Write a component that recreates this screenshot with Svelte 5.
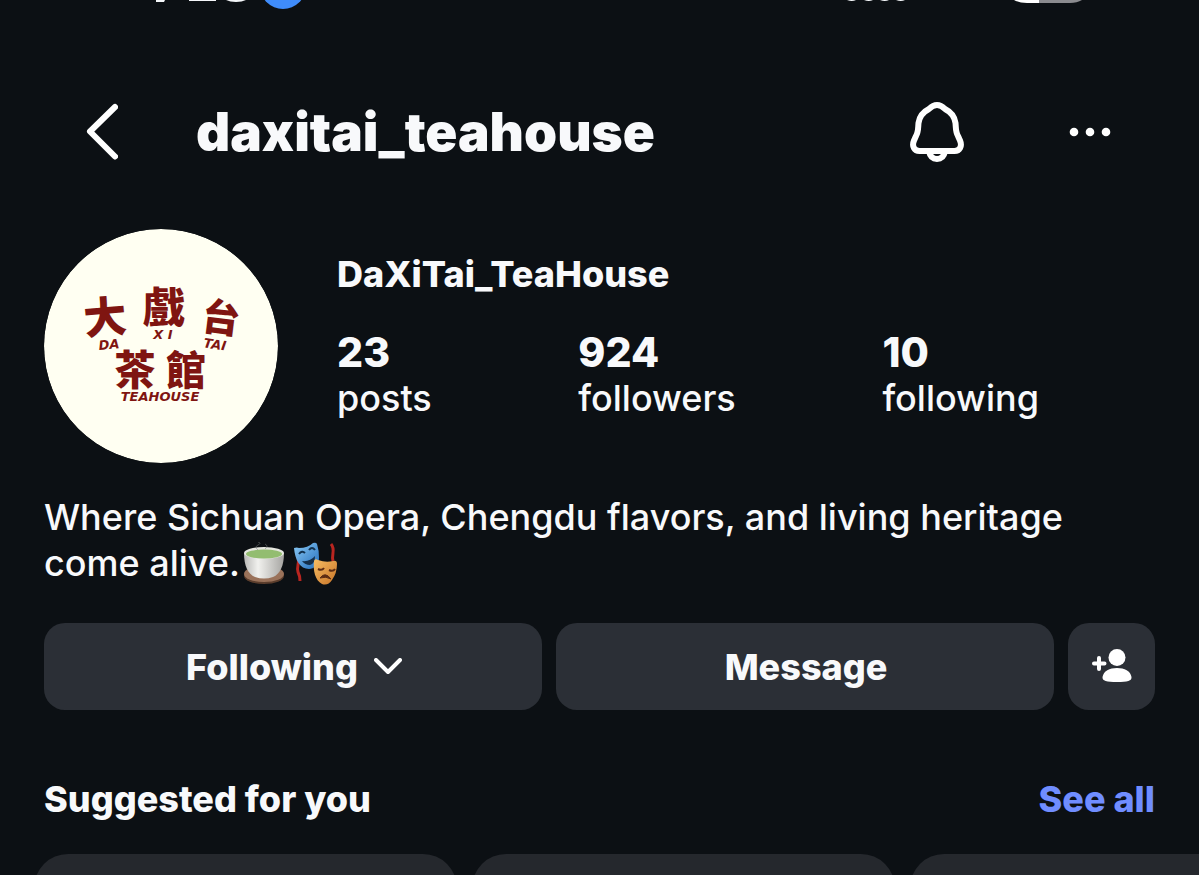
<script>
  const stats = [
    { value: 23, label: 'posts' },
    { value: 924, label: 'followers' },
    { value: 10, label: 'following' },
  ];

  let following = $state(true);
  const suggestions = [1, 2, 3];
</script>

<div class="page">
  <div class="status">
    <svg class="clock" width="180" height="10" viewBox="0 0 180 10" aria-hidden="true">
      <path d="M26 0h9l-1 2h-8z M59 0h27v1h-27z M96 0h20q-4 2-10 2t-10-2z" fill="#f5f7fa" />
      <circle cx="153" cy="-14" r="23" fill="#3f8cfb" />
    </svg>
    <svg class="signal" width="260" height="10" viewBox="0 0 260 10" aria-hidden="true">
      <path d="M16 0h9q-4 2-9 0z M33 0h9q-4 2-9 0z M49 0h9q-4 2-9 0z M65 0h9q-4 2-9 0z" fill="#f5f7fa" />
      <path d="M183 0h25v3h-12q-8 0-13-3z" fill="#fff" />
      <path d="M208 0h43q-5 3-12 3h-31z" fill="#8b8b8f" />
    </svg>
  </div>

  <header>
    <button class="icon-btn" aria-label="Back">
      <svg class="outline" width="34" height="58" viewBox="0 0 34 58">
        <path d="M31 4 6 28.500l25 25" />
      </svg>
    </button>
    <h1>daxitai_teahouse</h1>
    <button class="icon-btn bell" aria-label="Notifications">
      <svg class="outline" width="56" height="62" viewBox="0 0 56 62">
        <path d="M28 4C24.500 4 22.500 5.500 20 8C14 11 10.500 15 9.500 22C9 27 9.500 31 7 35L5 39.500C2.500 45.500 5.500 50 10.500 50H45.500C50.500 50 53.500 45.500 51 39.500L49 35C46.500 31 47 27 46.500 22C45.500 15 42 11 36 8C33.500 5.500 31.500 4 28 4Z" />
        <path d="M20 50.500C21 55.500 24 58 28 58C32 58 35 55.500 36 50.500" />
      </svg>
    </button>
    <button class="icon-btn dots" aria-label="More options">
      <svg width="42" height="10" viewBox="0 0 42 10">
        <circle cx="5" cy="5" r="4.300" />
        <circle cx="21" cy="5" r="4.300" />
        <circle cx="37" cy="5" r="4.300" />
      </svg>
    </button>
  </header>

  <main>
    <section class="profile">
      <svg class="avatar" width="234" height="234" viewBox="0 0 234 234" role="img" aria-label="Da Xi Tai Teahouse">
        <circle cx="117" cy="117" r="117" fill="#fffff2" />
        <g class="han">
          <text x="61" y="104" font-size="43" transform="rotate(-5 61 88)">大</text>
          <text x="120" y="94" font-size="42">戲</text>
          <text x="177" y="103" font-size="38" transform="rotate(7 177 90)">台</text>
          <text x="91" y="156" font-size="41">茶</text>
          <text x="142" y="156" font-size="40">館</text>
        </g>
        <g class="latin">
          <text x="65" y="120" transform="rotate(-5 65 115)">DA</text>
          <text x="119" y="110">X I</text>
          <text x="171" y="120" transform="rotate(8 171 115)">TAI</text>
          <text x="116" y="172">TEAHOUSE</text>
        </g>
      </svg>

      <div class="info">
        <h2>DaXiTai_TeaHouse</h2>
        <div class="stats">
          {#each stats as stat}
            <a href="#{stat.label}">
              <strong>{stat.value}</strong>
              <span>{stat.label}</span>
            </a>
          {/each}
        </div>
      </div>
    </section>

    <p class="bio">
      Where Sichuan Opera, Chengdu flavors, and living heritage <br />come alive.<svg class="emoji" width="44" height="44" viewBox="0 0 44 44" role="img" aria-label="Tea">
        <defs>
          <linearGradient id="cup" x1="0" x2="1">
            <stop offset="0" stop-color="#b9b9b7" />
            <stop offset=".35" stop-color="#f1f1ee" />
            <stop offset="1" stop-color="#a6a5a2" />
          </linearGradient>
        </defs>
        <ellipse cx="22" cy="34" rx="20" ry="8" fill="#5b3d2c" />
        <ellipse cx="22" cy="32" rx="20" ry="8" fill="#9a725a" />
        <path d="M2 11c0 13 4 21 11 24q9 3 18 0c7-3 11-11 11-24z" fill="url(#cup)" />
        <ellipse cx="22" cy="11" rx="20" ry="6" fill="#e5e6df" />
        <ellipse cx="22" cy="12" rx="18" ry="4.500" fill="#93bd70" />
        <path d="M16 8q-4-3 0-5t0-3M23 7q4-3 0-5" fill="none" stroke="#777c7c" stroke-width="1" opacity=".5" />
      </svg><svg class="emoji masks" width="46" height="44" viewBox="0 0 46 44" role="img" aria-label="Performing arts">
        <defs>
          <linearGradient id="blue" x2="1" y2="1">
            <stop offset="0" stop-color="#8ccbf6" />
            <stop offset="1" stop-color="#236dbb" />
          </linearGradient>
          <linearGradient id="gold" x2="1" y2="1">
            <stop offset="0" stop-color="#f7bd63" />
            <stop offset="1" stop-color="#c87427" />
          </linearGradient>
        </defs>
        <path d="M4 13c4 6-1 11 1 17q2 4 2 9M38 2c5 6 0 10 2 17" fill="none" stroke="#b92520" stroke-width="3" />
        <path d="M1 6q3-1 5 0 9 0 14-5 3-1 4 1 2 6 2 14c0 7-5 11-10 11C7 27 2 18 1 6z" fill="url(#blue)" />
        <path d="M6 12q3-4 6-1M16 8q3-4 6 0" fill="none" stroke="#12324f" stroke-width="2" />
        <path d="M9 19q8 1 13-5 0 8-5 9-5 0-8-4z" fill="#152f4a" />
        <path d="M21 19q1-3 4-1 8 3 15 1 4-1 4 3 0 9-5 16-4 6-10 4c-7-4-9-13-8-23z" fill="url(#gold)" />
        <path d="M25 27q4 2 6-1M36 28q4 2 6-1" fill="none" stroke="#5d2c13" stroke-width="2" />
        <path d="M27 36q5-7 11 1-5-3-11-1z" fill="#5d2c13" stroke="#5d2c13" stroke-width="1" />
      </svg>
    </p>

    <div class="actions">
      <button class="wide" onclick={() => (following = !following)}>
        {following ? 'Following' : 'Follow'}
        <svg width="28" height="18" viewBox="0 0 28 18" aria-hidden="true">
          <path d="M2 2l12 12L26 2" />
        </svg>
      </button>
      <button class="wide">Message</button>
      <button class="add" aria-label="Suggested accounts">
        <svg width="42" height="36" viewBox="0 0 42 36">
          <path class="plus" d="M8 9v11M3 14.500h10.500" />
          <circle cx="26" cy="8.500" r="8.500" />
          <path d="M11.500 28c1-6 7-9 14.500-9s13.500 3 14.500 9c.500 4-4 5-14.500 5s-15-1-14.500-5z" />
        </svg>
      </button>
    </div>

    <div class="section-title">
      <h3>Suggested for you</h3>
      <a href="#suggested">See all</a>
    </div>
  </main>

  <div class="cards">
    {#each suggestions as id (id)}
      <article class="card"></article>
    {/each}
  </div>
</div>

<style>
  :global(body) {
    background: #0c1014;
  }

  .page {
    height: 100vh;
    overflow: hidden;
    background: #0c1014;
    color: #f8f9fb;
    font-family: Inter, "Liberation Sans", sans-serif;
  }

  h1, h2, h3, p {
    margin: 0;
  }

  a {
    color: inherit;
    text-decoration: none;
  }

  button {
    border: none;
    padding: 0;
    color: inherit;
    font-family: inherit;
    cursor: pointer;
  }

  svg {
    display: block;
    flex: none;
  }

  .status {
    display: flex;
    justify-content: space-between;
    height: 10px;
    padding: 0 108px 0 130px;
  }

  header {
    display: flex;
    align-items: center;
    padding: 90px 88px 65px 84px;
  }
  .icon-btn {
    background: none;
  }
  .outline {
    fill: none;
    stroke: #fff;
    stroke-width: 6;
    stroke-linecap: round;
    stroke-linejoin: round;
  }
  .dots svg {
    fill: #fff;
  }
  h1 {
    flex: 1;
    margin-left: 78px;
    font-size: 53px;
    font-weight: 900;
    line-height: 64px;
  }
  .dots {
    margin-left: 104px;
  }

  main {
    padding: 0 44px;
  }

  .profile {
    display: flex;
    gap: 59px;
  }
  .avatar {
    border-radius: 50%;
  }
  .han {
    fill: #7f1511;
    font-family: "Noto Sans CJK TC", sans-serif;
    font-weight: 900;
    text-anchor: middle;
  }
  .latin {
    fill: #7f1511;
    font-family: "DejaVu Sans", sans-serif;
    font-size: 13px;
    font-weight: 700;
    font-style: italic;
    text-anchor: middle;
  }

  .info {
    flex: 1;
    padding-top: 22px;
  }
  h2 {
    font-size: 36px;
    font-weight: 800;
    line-height: 46px;
  }
  .stats {
    display: flex;
    justify-content: space-between;
    margin-top: 32px;
    padding-right: 116px;
  }
  .stats a {
    display: flex;
    flex-direction: column;
    font-size: 36px;
    font-weight: 500;
    line-height: 46px;
  }
  .stats strong {
    font-size: 41px;
    font-weight: 800;
  }

  .bio {
    margin-top: 31px;
    font-size: 36px;
    font-weight: 500;
    line-height: 46px;
  }
  .emoji {
    display: inline-block;
    margin: -4px 0 0 2px;
    vertical-align: middle;
  }
  .masks {
    margin-left: 7px;
  }

  .actions {
    display: flex;
    gap: 14px;
    margin-top: 37px;
  }
  .actions button {
    display: flex;
    align-items: center;
    justify-content: center;
    gap: 16px;
    height: 87px;
    border-radius: 21px;
    background: #2b2f36;
    font-size: 36px;
    font-weight: 800;
  }
  .actions .wide {
    flex: 1;
    padding-left: 2px;
  }
  .actions .add {
    width: 87px;
  }
  .wide svg {
    fill: none;
    stroke: #fff;
    stroke-width: 4;
    stroke-linecap: round;
    stroke-linejoin: round;
  }
  .add svg {
    fill: #fff;
  }
  .add .plus {
    stroke: #fff;
    stroke-width: 4;
    stroke-linecap: round;
  }

  .section-title {
    display: flex;
    align-items: center;
    justify-content: space-between;
    margin-top: 66px;
    font-size: 36px;
    line-height: 46px;
  }
  h3 {
    font-size: 36px;
    font-weight: 800;
  }
  .section-title a {
    color: #708dff;
    font-weight: 800;
  }

  .cards {
    display: flex;
    gap: 15px;
    margin-top: 32px;
    padding-left: 34px;
  }
  .card {
    flex: none;
    width: 36.3%;
    height: 540px;
    border-radius: 34px;
    background: #25282d;
  }
</style>
